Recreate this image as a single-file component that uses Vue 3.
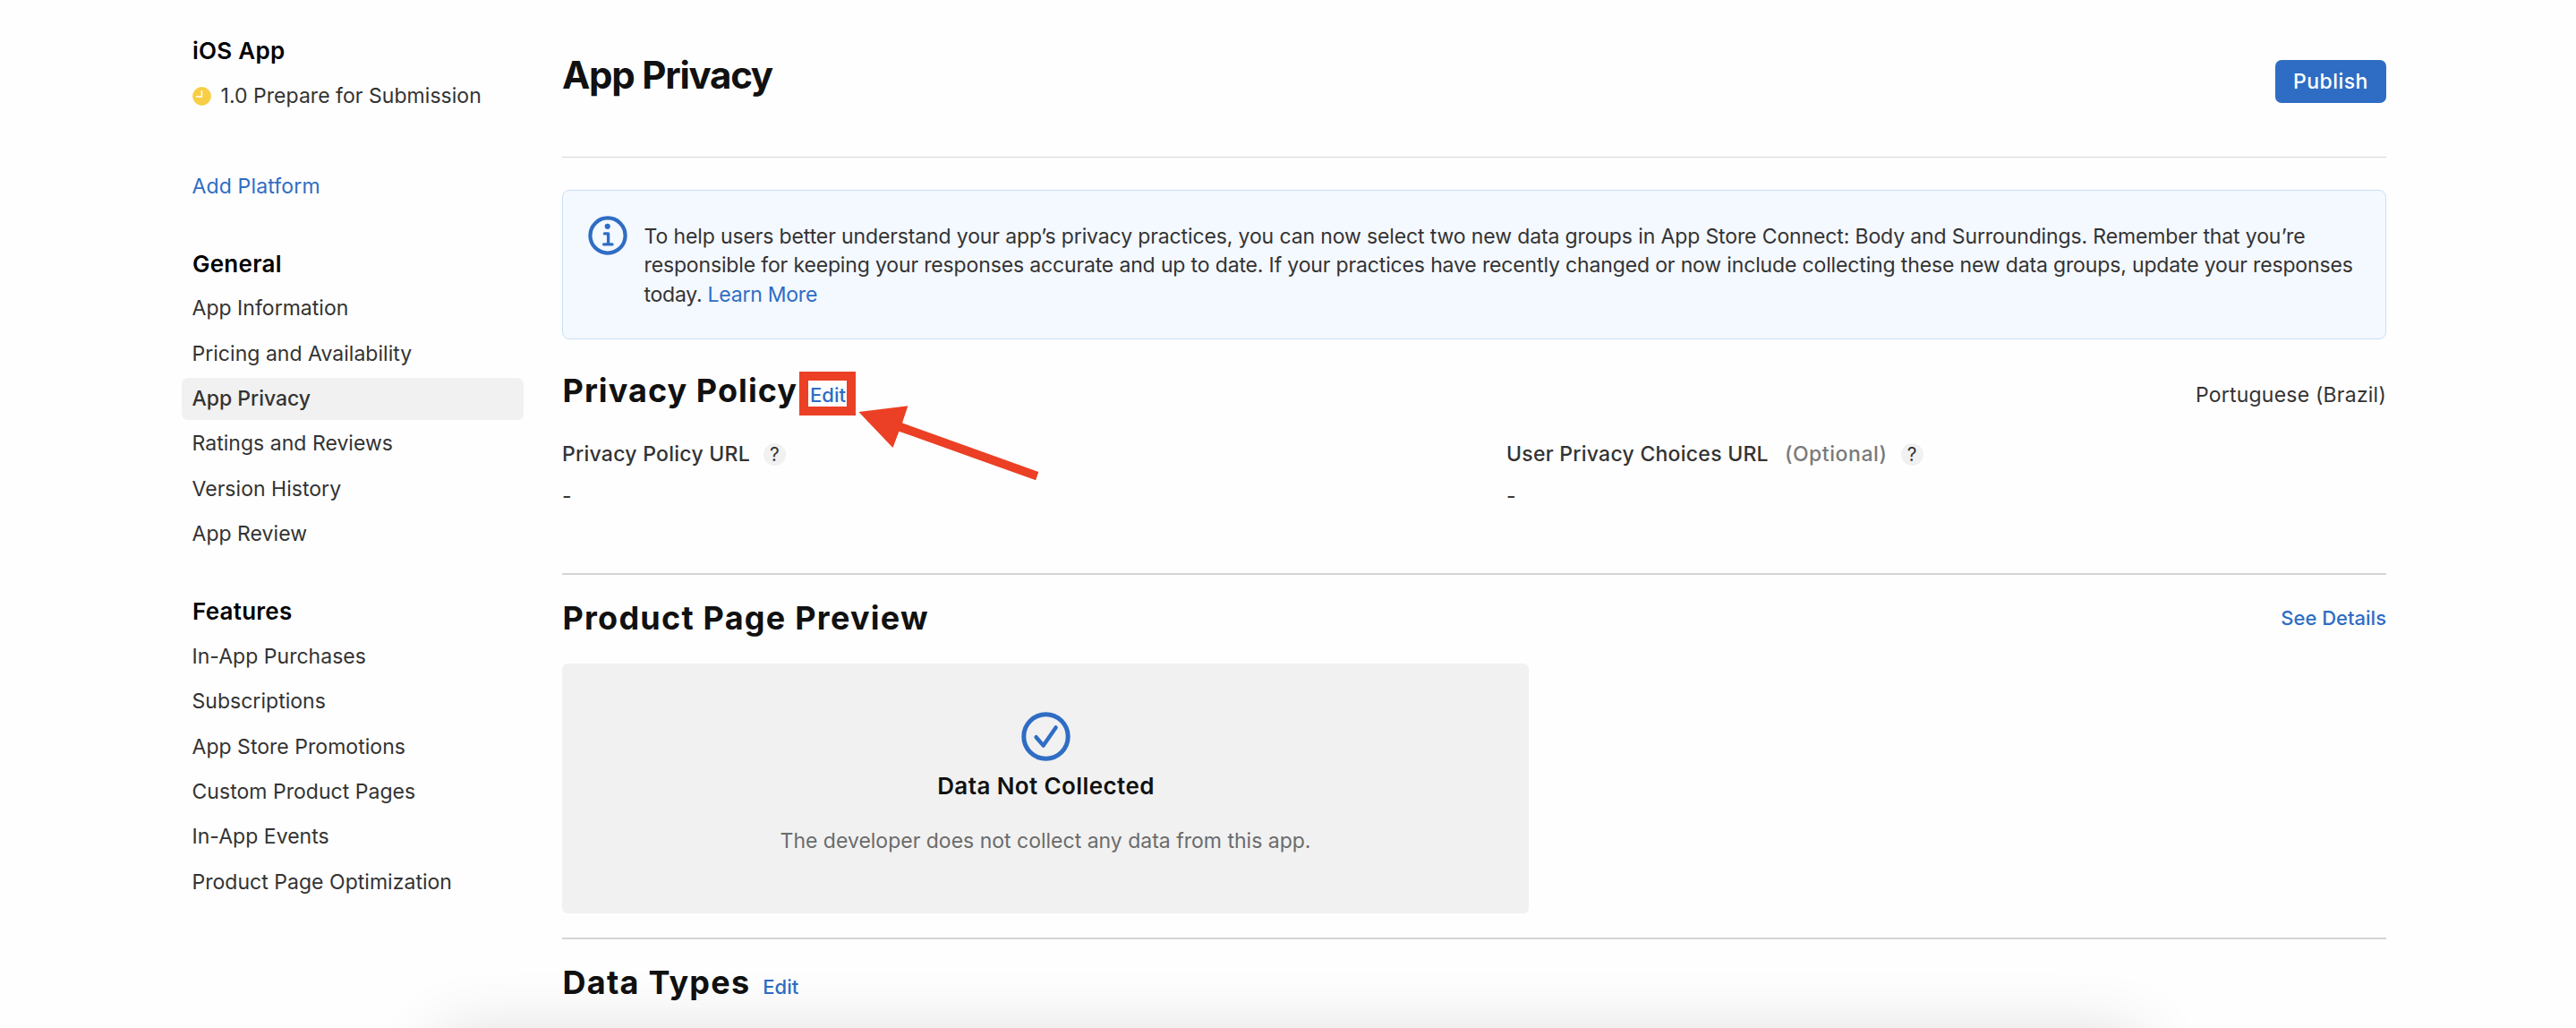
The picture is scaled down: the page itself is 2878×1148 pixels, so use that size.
<script setup>
const groups = [
  {
    title: 'General',
    items: [
      'App Information',
      'Pricing and Availability',
      'App Privacy',
      'Ratings and Reviews',
      'Version History',
      'App Review',
    ],
  },
  {
    title: 'Features',
    items: [
      'In-App Purchases',
      'Subscriptions',
      'App Store Promotions',
      'Custom Product Pages',
      'In-App Events',
      'Product Page Optimization',
    ],
  },
]
const current = 'App Privacy'
</script>

<template>
  <div class="page">
    <aside class="sidebar">
      <h2 class="side-title">iOS App</h2>
      <div class="status">
        <svg class="clock" viewBox="0 0 21 21">
          <circle cx="10.5" cy="10.5" r="10.4" fill="#f7ce46" />
          <path d="M10.4 4v7.1H4" fill="none" stroke="#fff" stroke-width="1.5" />
        </svg>
        <span>1.0 Prepare for Submission</span>
      </div>
      <a class="add">Add Platform</a>
      <nav v-for="g in groups" :key="g.title" class="group">
        <h2 class="side-title">{{ g.title }}</h2>
        <ul>
          <li v-for="item in g.items" :key="item" :class="{ active: item === current }">{{ item }}</li>
        </ul>
      </nav>
    </aside>

    <main class="main">
      <header class="top">
        <h1>App Privacy</h1>
        <button class="publish">Publish</button>
      </header>

      <div class="notice">
        <svg class="info" viewBox="0 0 44 44">
          <circle cx="22" cy="22" r="19.6" fill="none" stroke="#2f6dc4" stroke-width="4.2" />
          <circle cx="21.7" cy="11.8" r="3.1" fill="#2f6dc4" />
          <path d="M18.4 19.9H22.6V31.7M17.6 31.9H27" fill="none" stroke="#2f6dc4" stroke-width="3.3" stroke-linecap="round" stroke-linejoin="round" />
        </svg>
        <p>
          <span class="line">To help users better understand your app’s privacy practices, you can now select two new data groups in App Store Connect: Body and Surroundings. Remember that you’re</span>
          <span class="line">responsible for keeping your responses accurate and up to date. If your practices have recently changed or now include collecting these new data groups, update your responses</span>
          <span class="line">today. <a>Learn More</a></span>
        </p>
      </div>

      <section class="policy">
        <div class="head">
          <h2>Privacy Policy</h2>
          <a class="action edit">Edit</a>
          <span class="locale">Portuguese (Brazil)</span>
        </div>
        <div class="fields">
          <div class="field">
            <div class="label"><span>Privacy Policy URL</span><i class="help">?</i></div>
            <div class="value">-</div>
          </div>
          <div class="field">
            <div class="label">
              <span>User Privacy Choices URL</span><span class="optional">(Optional)</span><i class="help">?</i>
            </div>
            <div class="value">-</div>
          </div>
        </div>
        <svg class="callout" viewBox="0 0 270 126">
          <rect x="5" y="5" width="53" height="39" fill="none" stroke="#eb4025" stroke-width="10" />
          <path d="M66.4 45 121.4 38.3 115 57.3 267.3 112 264.2 121.2 111.4 66.7 104.5 85Z" fill="#eb4025" />
        </svg>
      </section>

      <section class="preview">
        <div class="head">
          <h2>Product Page Preview</h2>
          <a class="action details">See Details</a>
        </div>
        <div class="card">
          <svg class="check" viewBox="0 0 55 55">
            <circle cx="27.5" cy="27.5" r="24.7" fill="none" stroke="#2f6dc4" stroke-width="5" />
            <path d="M16.6 28.2 24.7 37.6 38.6 17.4" fill="none" stroke="#2f6dc4" stroke-width="4.4" stroke-linecap="round" stroke-linejoin="round" />
          </svg>
          <h3>Data Not Collected</h3>
          <p>The developer does not collect any data from this app.</p>
        </div>
      </section>

      <section class="types">
        <div class="head">
          <h2>Data Types</h2>
          <a class="action edit">Edit</a>
        </div>
      </section>
    </main>
    <div class="sheet-shadow"></div>
  </div>
</template>

<style>
body {
  margin: 0;
  background: #fff;
}
</style>

<style scoped>
.page {
  position: relative;
  display: flex;
  box-sizing: border-box;
  width: 2878px;
  height: 1148px;
  padding-left: 203px;
  overflow: hidden;
  background: #fefefe;
  color: #333;
  font: 400 23px/32px Inter, "Liberation Sans", sans-serif;
  white-space: nowrap;
}
h1, h2, h3, p, ul { margin: 0; padding: 0; font-weight: inherit; }
ul { list-style: none; }
a { color: #2f6dc4; }

.sidebar {
  width: 382px;
  flex: none;
  padding-top: 41px;
}
.side-title {
  padding-left: 12px;
  color: #000;
  font-size: 26px;
  font-weight: 600;
  letter-spacing: 0.25px;
}
.status {
  display: flex;
  align-items: center;
  gap: 11px;
  margin: 18px 0 69px;
  padding-left: 11.5px;
  letter-spacing: 0.04px;
}
.clock { width: 21px; height: 21px; }
.add {
  display: block;
  padding-left: 11.5px;
  letter-spacing: 0.15px;
}
.group { padding-top: 43.8px; }
.add + .group { padding-top: 54.5px; }
.group ul { padding-top: 10.9px; }
.group li {
  height: 47px;
  margin-bottom: 3.33px;
  padding: 0 11.5px;
  border-radius: 7px;
  line-height: 47px;
  letter-spacing: 0.03px;
}
.group li.active {
  background: #f1f1f1;
  font-weight: 500;
  letter-spacing: -0.03px;
}

.main {
  width: 2038px;
  flex: none;
  margin-left: 43px;
}
.top {
  display: flex;
  justify-content: space-between;
  align-items: flex-start;
  box-sizing: border-box;
  height: 176px;
  border-bottom: 1px solid #d6d6d6;
}
h1 {
  margin-top: 59px;
  color: #111;
  font-size: 42px;
  font-weight: 700;
  line-height: 50px;
  letter-spacing: -1.25px;
}
.publish {
  width: 124px;
  height: 48px;
  margin-top: 67px;
  padding: 0;
  border: 0;
  border-radius: 7px;
  background: #2f6dc4;
  color: #fff;
  font: 500 23px/48px Inter, sans-serif;
  letter-spacing: 0.45px;
}
.notice {
  display: flex;
  align-items: flex-start;
  gap: 19px;
  box-sizing: border-box;
  height: 167px;
  margin-top: 36px;
  padding: 27.5px 0 0 27.5px;
  border: 1px solid #c8e1f8;
  border-radius: 8px;
  background: #f4f8ff;
}
.info { flex: none; width: 44px; height: 44px; }
.notice p {
  margin-top: 7.5px;
  line-height: 32.3px;
  letter-spacing: -0.125px;
}
.notice .line { display: block; }
.notice .line:nth-child(2) { letter-spacing: -0.148px; }
.notice .line:nth-child(3) { letter-spacing: -0.24px; }

.head { display: flex; align-items: baseline; }
.head h2 {
  padding-left: 0.5px;
  color: #111;
  font-size: 36px;
  font-weight: 700;
  line-height: 44px;
  letter-spacing: 1.24px;
}
.action { font-size: 22px; font-weight: 500; }
.edit { margin-left: 14px; }
.policy {
  position: relative;
  box-sizing: border-box;
  height: 263px;
  padding-top: 35px;
  border-bottom: 2px solid #d5d5d5;
}
.policy h2 { letter-spacing: 1.06px; }
.locale { margin-left: auto; letter-spacing: 0.22px; }
.fields { display: flex; margin-top: 34px; }
.field { flex: none; width: 1055px; }
.label {
  display: flex;
  align-items: center;
  font-weight: 500;
  line-height: 30px;
  letter-spacing: 0.26px;
}
.optional { margin-left: 18px; color: #7a7a7a; letter-spacing: 0.55px; }
.help {
  width: 25px;
  height: 25px;
  margin-left: 15px;
  border-radius: 50%;
  background: #f1f1f1;
  font-size: 21px;
  font-style: normal;
  font-weight: 400;
  line-height: 25px;
  letter-spacing: 0;
  text-align: center;
}
.value { margin-top: 17px; line-height: 30px; }
.callout {
  position: absolute;
  left: 265px;
  top: 36px;
  width: 270px;
  height: 126px;
}

.preview {
  box-sizing: border-box;
  height: 407px;
  padding-top: 26px;
  border-bottom: 2px solid #d5d5d5;
}
.details { margin-left: auto; align-self: flex-start; line-height: 44px; }
.card {
  display: flex;
  flex-direction: column;
  align-items: center;
  box-sizing: border-box;
  width: 1080px;
  height: 279px;
  margin-top: 29px;
  padding-top: 53.5px;
  border-radius: 6px;
  background: #f1f1f1;
}
.check { width: 55px; height: 55px; }
.card h3 {
  margin-top: 12px;
  padding-left: 1px;
  color: #111;
  font-size: 26px;
  font-weight: 600;
  letter-spacing: 0.4px;
}
.card p { margin-top: 29.5px; color: #6b6b6b; }
.types { padding-top: 26px; }

/* Upper edge of the sheet that slides in from below the window */
.sheet-shadow {
  position: absolute;
  left: 490px;
  top: 1160px;
  width: 1902px;
  height: 400px;
  border-radius: 20px;
  box-shadow: 0 0 78px rgba(0, 0, 0, 0.16);
}
</style>
